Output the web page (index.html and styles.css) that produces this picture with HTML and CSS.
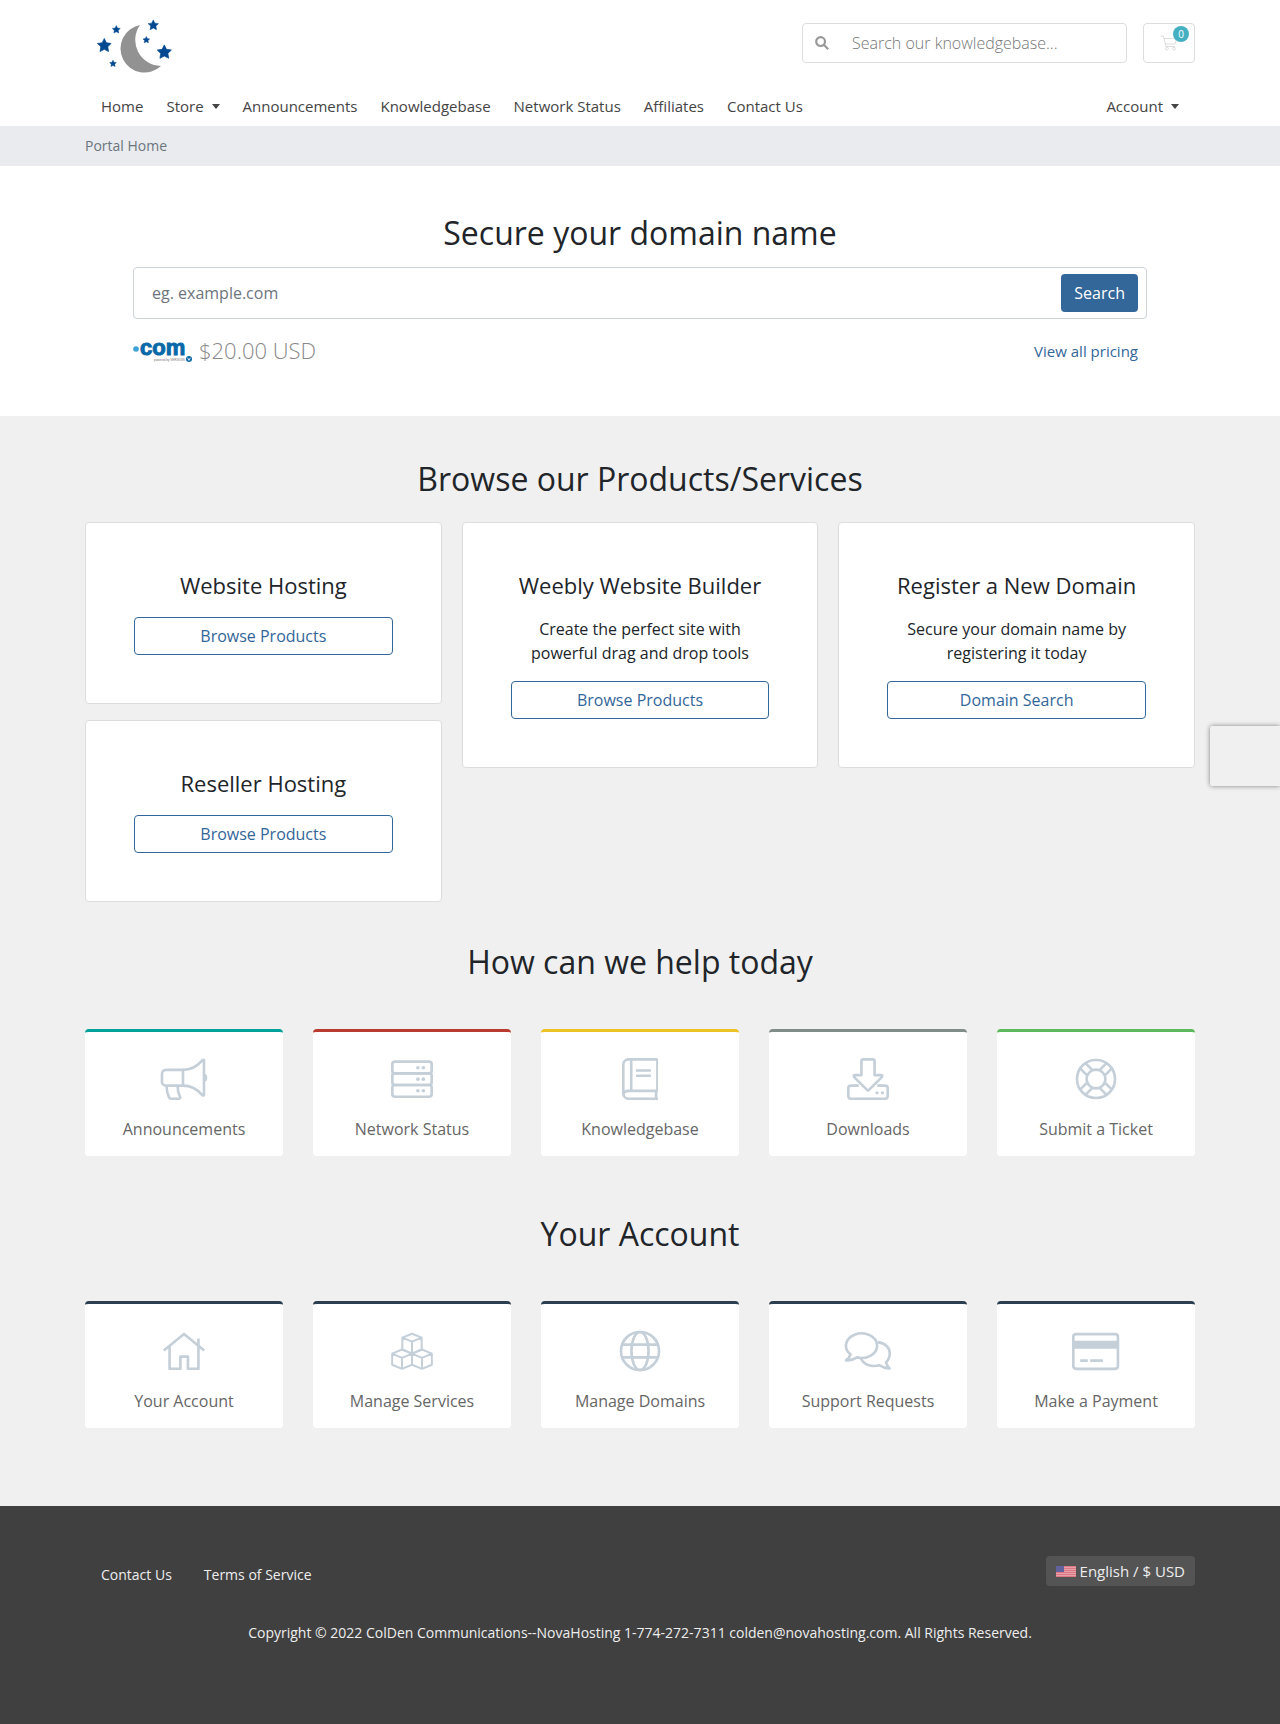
FILE: index.html
```html
<!DOCTYPE html>
<html lang="en">
<head>
  <meta charset="UTF-8">
  <meta name="viewport" content="width=device-width, initial-scale=1.0">
  <title>Portal Home - NovaHosting</title>
  <link rel="stylesheet" href="styles.css">
</head>
<body>
  <header class="header">
    <div class="container topbar">
      <a href="#" class="logo" aria-label="NovaHosting">
        <svg width="100" height="60" viewBox="0 -3 100 60">
          <defs>
            <path id="star" d="M0-10L2.9-4L9.5-3.1L4.8 1.5L5.9 8.1L0 5L-5.9 8.1L-4.8 1.5L-9.5-3.1L-2.9-4Z"/>
          </defs>
          <path fill="#929292" d="M55 9A24 24 0 1 0 76 50A26 26 0 0 1 55 9Z"/>
          <g fill="#004990" stroke="#004990">
            <use href="#star" transform="translate(19.3 29.7) scale(.72)"/>
            <use href="#star" transform="translate(31.3 13.7) scale(.42)"/>
            <use href="#star" transform="translate(68.3 9.3) scale(.54)"/>
            <use href="#star" transform="translate(61.3 24) scale(.36)"/>
            <use href="#star" transform="translate(79.3 36.3) scale(.74)"/>
            <use href="#star" transform="translate(28 47.7) scale(.36)"/>
          </g>
        </svg>
      </a>
      <form class="kb-search">
        <button type="submit" aria-label="Search">
          <svg width="14" height="14" viewBox="0 0 14 14" fill="none" stroke="#999" stroke-width="2.2">
            <circle cx="5.6" cy="5.6" r="4.4"/>
            <path d="M8.8 8.8L13.2 13.2"/>
          </svg>
        </button>
        <input type="text" placeholder="Search our knowledgebase..." aria-label="Search our knowledgebase">
      </form>
      <a href="#" class="cart" aria-label="Shopping Cart">
        <svg width="18" height="16" viewBox="0 0 18 16" fill="none" stroke="#ddd">
          <path d="M.5 1H3.4L6 11.5H15M3.9 3.5H16.5L15 9H5.3"/>
          <circle cx="6.8" cy="13.6" r="1.4"/>
          <circle cx="14" cy="13.6" r="1.4"/>
        </svg>
        <span class="badge">0</span>
      </a>
    </div>
    <nav class="container main-nav">
      <a href="#">Home</a>
      <a href="#" class="dropdown">Store</a>
      <a href="#">Announcements</a>
      <a href="#">Knowledgebase</a>
      <a href="#">Network Status</a>
      <a href="#">Affiliates</a>
      <a href="#">Contact Us</a>
      <a href="#" class="dropdown account">Account</a>
    </nav>
  </header>

  <nav class="breadcrumb" aria-label="breadcrumb">
    <div class="container">Portal Home</div>
  </nav>

  <section class="domain-search">
    <div class="container">
      <h2>Secure your domain name</h2>
      <form class="domain-form">
        <input type="text" placeholder="eg. example.com" aria-label="Domain name">
        <button type="submit">Search</button>
      </form>
      <div class="pricing">
        <svg class="tld-logo" width="59" height="33" viewBox="0 -5 59 33" role="img" aria-label=".com">
          <circle cx="3" cy="10" r="2.8" fill="#3ba3d8"/>
          <text class="tld-name" x="7" y="16">com</text>
          <text class="tld-note" x="21" y="22">powered by VERISIGN</text>
          <circle cx="56" cy="20" r="3" fill="#0a69a8"/>
          <path d="M54.6 18.8L56 21.4L57.4 18.8" fill="none" stroke="#fff" stroke-width=".8"/>
        </svg>
        <span class="price">$20.00 USD</span>
        <a href="#">View all pricing</a>
      </div>
    </div>
  </section>

  <main class="main-body">
    <div class="container">
      <h2>Browse our Products/Services</h2>
      <div class="products">
        <div class="product-column">
          <div class="product">
            <h3>Website Hosting</h3>
            <a href="#" class="btn-outline">Browse Products</a>
          </div>
          <div class="product">
            <h3>Reseller Hosting</h3>
            <a href="#" class="btn-outline">Browse Products</a>
          </div>
        </div>
        <div class="product-column">
          <div class="product">
            <h3>Weebly Website Builder</h3>
            <p>Create the perfect site with powerful drag and drop tools</p>
            <a href="#" class="btn-outline">Browse Products</a>
          </div>
        </div>
        <div class="product-column">
          <div class="product">
            <h3>Register a New Domain</h3>
            <p>Secure your domain name by registering it today</p>
            <a href="#" class="btn-outline">Domain Search</a>
          </div>
        </div>
      </div>

      <h2>How can we help today</h2>
      <div class="tiles">
        <a href="#" class="tile teal">
          <svg viewBox="-8 0 576 512">
            <path d="M272 144H64a48 48 0 0 0-48 48v96a48 48 0 0 0 48 48h208z"/>
            <path d="M272 144c96 0 180-50 236-116q20-16 20 6v412q0 22-20 6c-56-66-140-116-236-116"/>
            <path d="M72 336q0 84 30 144q8 16 24 16h98q22 0 12-22q-30-60-30-138"/>
            <path class="solid" d="M528 192a40 48 0 0 1 0 96z"/>
          </svg>
          Announcements
        </a>
        <a href="#" class="tile red">
          <svg viewBox="0 0 512 512">
            <rect x="16" y="44" width="480" height="143" rx="32"/>
            <rect x="16" y="187" width="480" height="142" rx="32"/>
            <rect x="16" y="329" width="480" height="143" rx="32"/>
            <g class="solid">
              <circle cx="328" cy="118" r="22"/><circle cx="394" cy="118" r="22"/>
              <circle cx="328" cy="258" r="22"/><circle cx="394" cy="258" r="22"/>
              <circle cx="328" cy="400" r="22"/><circle cx="394" cy="400" r="22"/>
            </g>
          </svg>
          Network Status
        </a>
        <a href="#" class="tile yellow">
          <svg viewBox="0 0 448 512">
            <path d="M432 392V32q0-16-16-16H80a64 64 0 0 0-64 64v352a64 64 0 0 0 64 64h360"/>
            <path d="M16 448q8-48 64-48h344q8 0 8-12M112 16v384M416 400v96M170 152h182M170 216h182"/>
          </svg>
          Knowledgebase
        </a>
        <a href="#" class="tile gray">
          <svg viewBox="0 0 512 512">
            <path d="M176 208V40q0-24 24-24h112q24 0 24 24v168h76q30 0 10 28L268 388q-12 12-24 0L90 236q-20-28 10-28z"/>
            <path d="M144 336H48q-32 0-32 32v96q0 32 32 32h416q32 0 32-32v-96q0-32-32-32h-96"/>
            <g class="solid"><circle cx="366" cy="424" r="20"/><circle cx="432" cy="424" r="20"/></g>
          </svg>
          Downloads
        </a>
        <a href="#" class="tile green">
          <svg viewBox="0 0 512 512">
            <circle cx="256" cy="256" r="232"/>
            <circle cx="256" cy="256" r="114"/>
            <g transform="translate(256 256)">
              <path transform="rotate(45)" d="M103-46H228M103 46H228"/>
              <path transform="rotate(135)" d="M103-46H228M103 46H228"/>
              <path transform="rotate(225)" d="M103-46H228M103 46H228"/>
              <path transform="rotate(315)" d="M103-46H228M103 46H228"/>
            </g>
          </svg>
          Submit a Ticket
        </a>
      </div>

      <h2>Your Account</h2>
      <div class="tiles">
        <a href="#" class="tile">
          <svg viewBox="0 0 512 512">
            <path d="M10 250L256 48L502 250M80 200V472H212V324H304V472H432V104"/>
          </svg>
          Your Account
        </a>
        <a href="#" class="tile">
          <svg class="thin" viewBox="0 0 512 512">
            <path d="M256 46L374 92V238L256 288L138 238V92ZM138 92L256 142L374 92M256 142V288"/>
            <path d="M134 238L256 288V424L134 474L14 424V288ZM14 288L134 340L256 288M134 340V474"/>
            <path d="M378 238L256 288V424L378 474L498 424V288ZM498 288L378 340L256 288M378 340V474"/>
          </svg>
          Manage Services
        </a>
        <a href="#" class="tile">
          <svg viewBox="0 0 512 512">
            <circle cx="256" cy="256" r="232"/>
            <ellipse cx="256" cy="256" rx="104" ry="232"/>
            <path d="M36 178H476M36 334H476"/>
          </svg>
          Manage Domains
        </a>
        <a href="#" class="tile">
          <svg viewBox="-8 0 576 512">
            <path d="M72 297A190 150 0 1 1 150 334Q90 376 18 370Q60 336 72 297Z"/>
            <path d="M404 148C500 160 550 220 550 284Q550 350 504 396Q516 440 548 468Q486 472 426 430C320 456 230 420 200 346"/>
          </svg>
          Support Requests
        </a>
        <a href="#" class="tile">
          <svg viewBox="0 0 576 512">
            <rect x="16" y="50" width="544" height="424" rx="34"/>
            <path class="solid" d="M16 132H560V230H16Z"/>
            <path d="M100 374H192M222 374H376"/>
          </svg>
          Make a Payment
        </a>
      </div>
    </div>
  </main>

  <footer class="footer">
    <div class="container">
      <div class="footer-row">
        <ul>
          <li><a href="#">Contact Us</a></li>
          <li><a href="#">Terms of Service</a></li>
        </ul>
        <button type="button" class="language">
          <svg width="20" height="11" viewBox="0 0 20 11">
            <path fill="#e8a0a8" d="M0 0H20V11H0Z"/>
            <path stroke="#dc7884" d="M0 .5H20M0 2.5H20M0 4.5H20M0 6.5H20M0 8.5H20M0 10.5H20"/>
            <path fill="#62629c" d="M0 0H8V6H0Z"/>
          </svg>
          English / $ USD
        </button>
      </div>
      <p class="copyright">Copyright &copy; 2022 ColDen Communications--NovaHosting 1-774-272-7311 colden@novahosting.com. All Rights Reserved.</p>
    </div>
  </footer>

  <div class="captcha-badge"></div>
</body>
</html>
```
FILE: styles.css
```css
:root {
  --primary: #336699;
  --text: #212529;
  --muted: #6c757d;
  --icon: #c4cfd8;
}

* {
  box-sizing: border-box;
  margin: 0;
  padding: 0;
}

body {
  font-family: "Open Sans", Verdana, Tahoma, sans-serif;
  font-size: 16px;
  line-height: 24px;
  color: var(--text);
  background-color: #fff;
}

a {
  color: var(--primary);
  text-decoration: none;
}

input,
button {
  font: inherit;
}

button {
  cursor: pointer;
}

svg {
  display: block;
}

h2 {
  font-size: 32px;
  font-weight: 400;
  line-height: 38px;
  text-align: center;
}

.container {
  width: 100%;
  max-width: 1140px;
  margin: 0 auto;
  padding: 0 15px;
}

/* Header */
.topbar {
  display: flex;
  align-items: center;
  gap: 16px;
  padding-top: 13px;
  padding-bottom: 13px;
}

.logo {
  margin-right: auto;
}

.kb-search {
  display: flex;
  width: 325px;
  height: 40px;
  border: 1px solid #ddd;
  border-radius: 4px;
}

.kb-search button {
  padding: 0 12px;
  border: 0;
  background: none;
}

.kb-search input {
  flex: 1;
  min-width: 0;
  padding: 0 11px;
  border: 0;
  outline: none;
  background: none;
  font-weight: 300;
}

.kb-search input::placeholder {
  color: #777;
}

.cart {
  position: relative;
  display: flex;
  align-items: center;
  justify-content: center;
  width: 52px;
  height: 40px;
  border: 1px solid #ddd;
  border-radius: 4px;
}

.badge {
  position: absolute;
  top: 2px;
  right: 5px;
  width: 16px;
  height: 16px;
  border-radius: 50%;
  background-color: #45b0c1;
  color: #fff;
  font-size: 10px;
  line-height: 16px;
  text-align: center;
}

.main-nav {
  display: flex;
  flex-wrap: wrap;
  gap: 0 23px;
  padding: 0 31px;
}

.main-nav a {
  padding: 8px 0;
  color: #444;
  font-size: 15px;
}

.dropdown {
  display: flex;
  align-items: center;
  gap: 8px;
}

.dropdown::after {
  content: "";
  border: 4px solid transparent;
  border-top: 5px solid #444;
  border-bottom: 0;
}

.main-nav .account {
  margin-left: auto;
}

.breadcrumb {
  padding: 8px 0;
  background-color: #e9ebee;
  color: var(--muted);
  font-size: 14px;
}

/* Domain search */
.domain-search .container {
  padding: 48px 63px;
}

.domain-form {
  display: flex;
  margin-top: 15px;
  padding: 6px 8px;
  border: 1px solid #ced4da;
  border-radius: 4px;
}

.domain-form input {
  flex: 1;
  min-width: 0;
  padding: 0 10px;
  border: 0;
  outline: none;
}

.domain-form input::placeholder {
  color: var(--muted);
}

.domain-form button {
  height: 38px;
  padding: 0 13px;
  border: 0;
  border-radius: 4px;
  background-color: var(--primary);
  color: #fff;
}

.pricing {
  display: flex;
  align-items: center;
  gap: 7px;
  margin: 15px 0 1px;
  padding-right: 9px;
}

.pricing a {
  margin-left: auto;
  font-size: 15px;
}

.price {
  color: #888;
  font-size: 22px;
  font-weight: 300;
  line-height: 33px;
}

.tld-name {
  fill: #0a69a8;
  stroke: #0a69a8;
  font: bold 22px "Liberation Sans", sans-serif;
}

.tld-note {
  fill: #777;
  font: 3px "Liberation Sans", sans-serif;
}

/* Products */
.main-body {
  padding: 44px 0 78px;
  background-color: #f0f0f0;
}

.products {
  display: grid;
  grid-template-columns: repeat(3, 1fr);
  gap: 20px;
  margin: 24px 0 41px;
}

.product-column {
  display: flex;
  flex-direction: column;
  gap: 16px;
}

.product {
  padding: 48px;
  border: 1px solid #ddd;
  border-radius: 4px;
  background-color: #fff;
  text-align: center;
}

.product h3 {
  margin-bottom: 18px;
  font-size: 22px;
  font-weight: 400;
  line-height: 28px;
}

.product p {
  margin-bottom: 16px;
}

.btn-outline {
  display: block;
  padding: 6px 12px;
  border: 1px solid var(--primary);
  border-radius: 4px;
}

/* Icon tiles */
.tiles {
  display: grid;
  grid-template-columns: repeat(5, 1fr);
  gap: 30px;
  margin-top: 48px;
}

.tiles + h2 {
  margin-top: 59px;
}

.tile {
  display: flex;
  flex-direction: column;
  align-items: center;
  gap: 17px;
  padding: 26px 8px 15px;
  border-top: 3px solid #2c3e50;
  border-radius: 4px;
  background-color: #fff;
  color: #666;
}

.tile svg {
  height: 42px;
  fill: none;
  stroke: var(--icon);
  stroke-width: 32;
  stroke-linejoin: round;
}

.tile .thin {
  stroke-width: 24;
}

.tile .solid {
  fill: var(--icon);
  stroke: none;
}

.teal { border-color: #00a29b; }
.red { border-color: #b93a2e; }
.yellow { border-color: #ecc225; }
.gray { border-color: #7f8c87; }
.green { border-color: #5cb85c; }

/* Footer */
.footer {
  padding: 50px 0 81px;
  background-color: #404040;
  color: #eee;
  font-size: 14px;
  line-height: 21px;
}

.footer-row {
  display: flex;
  align-items: flex-start;
  justify-content: space-between;
}

.footer ul {
  display: flex;
  list-style: none;
}

.footer ul a {
  display: block;
  padding: 8px 16px;
  color: #eee;
}

.language {
  display: flex;
  align-items: center;
  gap: 4px;
  height: 30px;
  padding: 0 10px;
  border: 0;
  border-radius: 4px;
  background-color: #545454;
  color: #eee;
  font-size: 15px;
}

.copyright {
  margin-top: 29px;
  text-align: center;
}

.captcha-badge {
  position: absolute;
  top: 726px;
  right: 0;
  width: 70px;
  height: 60px;
  border-radius: 2px 0 0 2px;
  box-shadow: gray 0 0 5px;
}

@media (max-width: 992px) {
  .products {
    grid-template-columns: 1fr;
  }

  .tiles {
    grid-template-columns: repeat(2, 1fr);
  }
}
```
